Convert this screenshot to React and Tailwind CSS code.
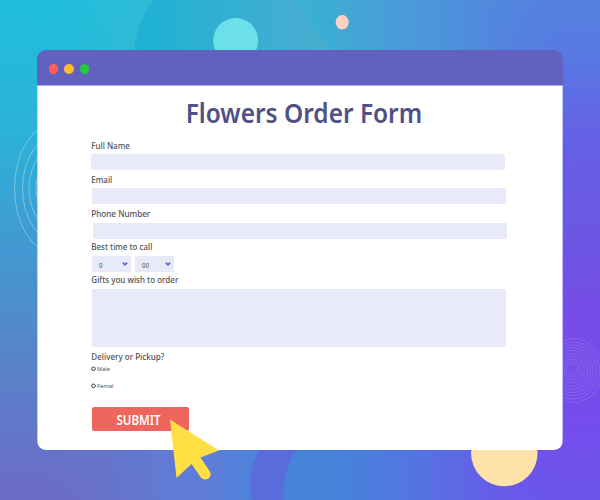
const fields = [
  { label: 'Full Name', width: 38.5, base: 11.6, labelBox: 'h-[17px]', input: 'h-[16px] w-[414px]', gap: 'mb-[2px]' },
  { label: 'Email', width: 21, base: 10.6, labelBox: 'h-[16px]', input: 'ml-[1px] h-[16px] w-[414px]', gap: 'mb-[2px]' },
  { label: 'Phone Number', width: 59, base: 11.4, labelBox: 'h-[17px]', input: 'ml-[1.5px] h-[16px] w-[414px]', gap: 'mb-0' },
];

function Text({ children, width, size = 9.5, fill = '#525255', weight = 500, height = 14, base = 10, x = 0.3 }) {
  return (
    <svg width={width} height={height} className="block overflow-visible">
      <text x={x} y={base} fontSize={size} fontWeight={weight} fill={fill} textLength={width} lengthAdjust="spacingAndGlyphs" fontFamily="'Noto Sans', 'Open Sans', sans-serif">{children}</text>
    </svg>
  );
}

function Backdrop() {
  return (
    <svg className="absolute inset-0" width="600" height="500" viewBox="0 0 600 500">
      <defs>
        <linearGradient id="top" x1="0" x2="1" y1="0" y2="0">
          <stop offset="0" stopColor="#1fbedc" />
          <stop offset=".22" stopColor="#30bbd8" />
          <stop offset=".53" stopColor="#3aafd3" />
          <stop offset=".64" stopColor="#489fd8" />
          <stop offset=".8" stopColor="#508bdc" />
          <stop offset="1" stopColor="#567de1" />
        </linearGradient>
        <linearGradient id="left" x1="0" x2="0" y1="0" y2="1">
          <stop offset="0" stopColor="#20bedc" />
          <stop offset=".25" stopColor="#2ab3d8" />
          <stop offset=".5" stopColor="#4398d2" />
          <stop offset=".75" stopColor="#5b80ca" />
          <stop offset="1" stopColor="#6c6bc4" />
        </linearGradient>
        <linearGradient id="right" x1="0" x2="0" y1="0" y2="1">
          <stop offset="0" stopColor="#5581df" />
          <stop offset=".12" stopColor="#5877e3" />
          <stop offset=".27" stopColor="#6561e4" />
          <stop offset=".5" stopColor="#6d54e3" />
          <stop offset=".64" stopColor="#774be8" />
          <stop offset=".85" stopColor="#744dec" />
          <stop offset="1" stopColor="#6c55ea" />
        </linearGradient>
        <linearGradient id="bottom" x1="0" x2="1" y1="0" y2="0">
          <stop offset="0" stopColor="#6a6fc6" />
          <stop offset=".15" stopColor="#6676cc" />
          <stop offset=".35" stopColor="#5e7cd8" />
          <stop offset=".45" stopColor="#4685d8" />
          <stop offset=".55" stopColor="#4683d9" />
          <stop offset=".67" stopColor="#5177e1" />
          <stop offset=".82" stopColor="#655fe8" />
          <stop offset="1" stopColor="#6e52eb" />
        </linearGradient>
        <linearGradient id="ring" x1="134" x2="335" y1="0" y2="0" gradientUnits="userSpaceOnUse">
          <stop offset="0" stopColor="#1db2d5" />
          <stop offset="1" stopColor="#4caccf" />
        </linearGradient>
        <linearGradient id="fadeRight" x1="480" x2="570" y1="0" y2="0" gradientUnits="userSpaceOnUse">
          <stop offset="0" stopColor="#000" />
          <stop offset="1" stopColor="#fff" />
        </linearGradient>
        <linearGradient id="fadeLeft" x1="38" x2="150" y1="0" y2="0" gradientUnits="userSpaceOnUse">
          <stop offset="0" stopColor="#fff" />
          <stop offset="1" stopColor="#000" />
        </linearGradient>
        <mask id="maskRight" maskUnits="userSpaceOnUse" x="480" y="0" width="120" height="500">
          <rect x="480" width="120" height="500" fill="url(#fadeRight)" />
        </mask>
        <mask id="maskLeft" maskUnits="userSpaceOnUse" x="0" y="0" width="150" height="500">
          <rect width="150" height="500" fill="url(#fadeLeft)" />
        </mask>
      </defs>
      <rect width="600" height="250" fill="url(#top)" />
      <rect y="250" width="600" height="250" fill="url(#bottom)" />
      <rect width="150" height="500" fill="url(#left)" mask="url(#maskLeft)" />
      <rect x="480" width="120" height="500" fill="url(#right)" mask="url(#maskRight)" />
      <path d="M134 60C134 35 141 15 154 0H298C306 22 317 39 334 52V60Z" fill="url(#ring)" />
      <circle cx="235.7" cy="40.5" r="22.5" fill="#6be0e8" />
      <ellipse cx="342.2" cy="22.3" rx="6.5" ry="7.2" fill="#fed1c3" />
      <path d="M261 448C249 465 249 485 252 500H283.5C283 480 287 463 298 448Z" fill="#5a6bdc" />
      <g fill="none" stroke="#a9e0ec" strokeOpacity=".55">
        <ellipse cx="57" cy="188.5" rx="42.5" ry="66" />
        <ellipse cx="60" cy="188.5" rx="37.5" ry="55" />
        <ellipse cx="60" cy="188.5" rx="31" ry="44" />
        <ellipse cx="60" cy="188.5" rx="24" ry="32" />
      </g>
      <g fill="none" stroke="#b69cf5" strokeOpacity=".36" strokeWidth=".8">
        {[5.5, 8, 10.5, 13.5, 16.5, 19.5, 22.5, 25.5, 28.5, 32].map((r) => (
          <ellipse key={r} cx={571 + r / 16} cy={369 + r / 20} rx={r * 0.93} ry={r} />
        ))}
      </g>
      <circle cx="504.3" cy="453" r="33.3" fill="#ffe1aa" />
    </svg>
  );
}

function TimeSelect({ value, className, width }) {
  return (
    <div className={'flex h-[16px] items-center justify-between rounded-[1px] bg-[#e8eafa] pl-[7px] pr-[3px] ' + className}>
      <div className="pt-[1.5px]"><Text width={width} size={6.2} height={10} base={8} x={0} fill="#68686d">{value}</Text></div>
      <svg width="6" height="6" viewBox="0 0 6 6"><path d="M.8 1.7 3 3.9 5.2 1.7" fill="none" stroke="#6468cb" strokeWidth="1.7" /></svg>
    </div>
  );
}

function Radio({ children, width }) {
  return (
    <div className="flex h-[8px] items-center gap-[1px]">
      <svg width="5" height="6" viewBox="0 0 5 6"><circle cx="2.5" cy="2.8" r="1.8" fill="none" stroke="#38383b" strokeWidth="1" /></svg>
      <Text width={width} size={6} height={8} base={6} weight={400} x={0}>{children}</Text>
    </div>
  );
}

export default function App() {
  return (
    <main className="relative h-[500px] w-[600px] overflow-hidden font-['Noto_Sans',sans-serif]">
      <Backdrop />
      <div className="relative px-[37px] pt-[50px]">
        <section className="flex h-[400px] w-[526px] flex-col overflow-hidden rounded-[9px]">
          <header className="flex h-[35px] items-center gap-[6px] bg-[#6261bf] pl-[11.5px] pt-[3px]">
            <i className="h-[10.5px] w-[9.5px] rounded-full bg-[#ff5f57]" />
            <i className="h-[10.5px] w-[9.5px] rounded-full bg-[#febc2e]" />
            <i className="h-[10.5px] w-[9.5px] rounded-full bg-[#28c840]" />
          </header>
          <div className="flex-1 border-x border-t border-x-white/60 border-t-[#a9a5e0] bg-white bg-clip-padding pl-[53px]">
            <h1 className="h-[51px] pl-[95px] pt-[9px]">
              <Text width={236.5} size={26.6} weight={600} height={36} base={27.8} x={-0.3} fill="#505187">Flowers Order Form</Text>
            </h1>
            <form>
              {fields.map((f) => (
                <div key={f.label} className={f.gap}>
                  <div className={f.labelBox}><Text width={f.width} base={f.base}>{f.label}</Text></div>
                  <div className={'rounded-[1px] bg-[#e8eafa] ' + f.input} />
                </div>
              ))}
              <div className="h-[17px]"><Text width={61} base={11}>Best time to call</Text></div>
              <div className="flex gap-[4px] pl-px">
                <TimeSelect value="0" width={3.5} className="w-[38.5px]" />
                <TimeSelect value="00" width={7} className="w-[39.5px]" />
              </div>
              <div className="h-[17px]"><Text width={87} base={11.3}>Gifts you wish to order</Text></div>
              <div className="ml-[.5px] h-[58px] w-[414.5px] rounded-[1px] bg-[#e8eafa]" />
              <div className="h-[18px]"><Text width={73} base={13.4}>Delivery or Pickup?</Text></div>
              <div className="flex flex-col gap-[9px] pl-[.4px]">
                <Radio width={13}>Male</Radio>
                <Radio width={16.5}>Femal</Radio>
              </div>
              <button type="button" className="mt-[17px] ml-[.5px] flex h-[24px] w-[97px] items-center rounded-[2px] bg-[#ee655d] pl-[25px]">
                <Text width={44} size={13.6} weight={600} height={18} base={14.9} x={-0.5} fill="#fff">SUBMIT</Text>
              </button>
            </form>
          </div>
        </section>
      </div>
      <svg className="absolute left-[169px] top-[418px]" width="54" height="66" viewBox="0 0 54 66">
        <path d="M1 1.5 50 32.5 31.5 39.5 40.5 53C45 59 36 65 31.5 59L22.5 46 7.5 60Z" fill="#ffdf43" />
      </svg>
    </main>
  );
}
